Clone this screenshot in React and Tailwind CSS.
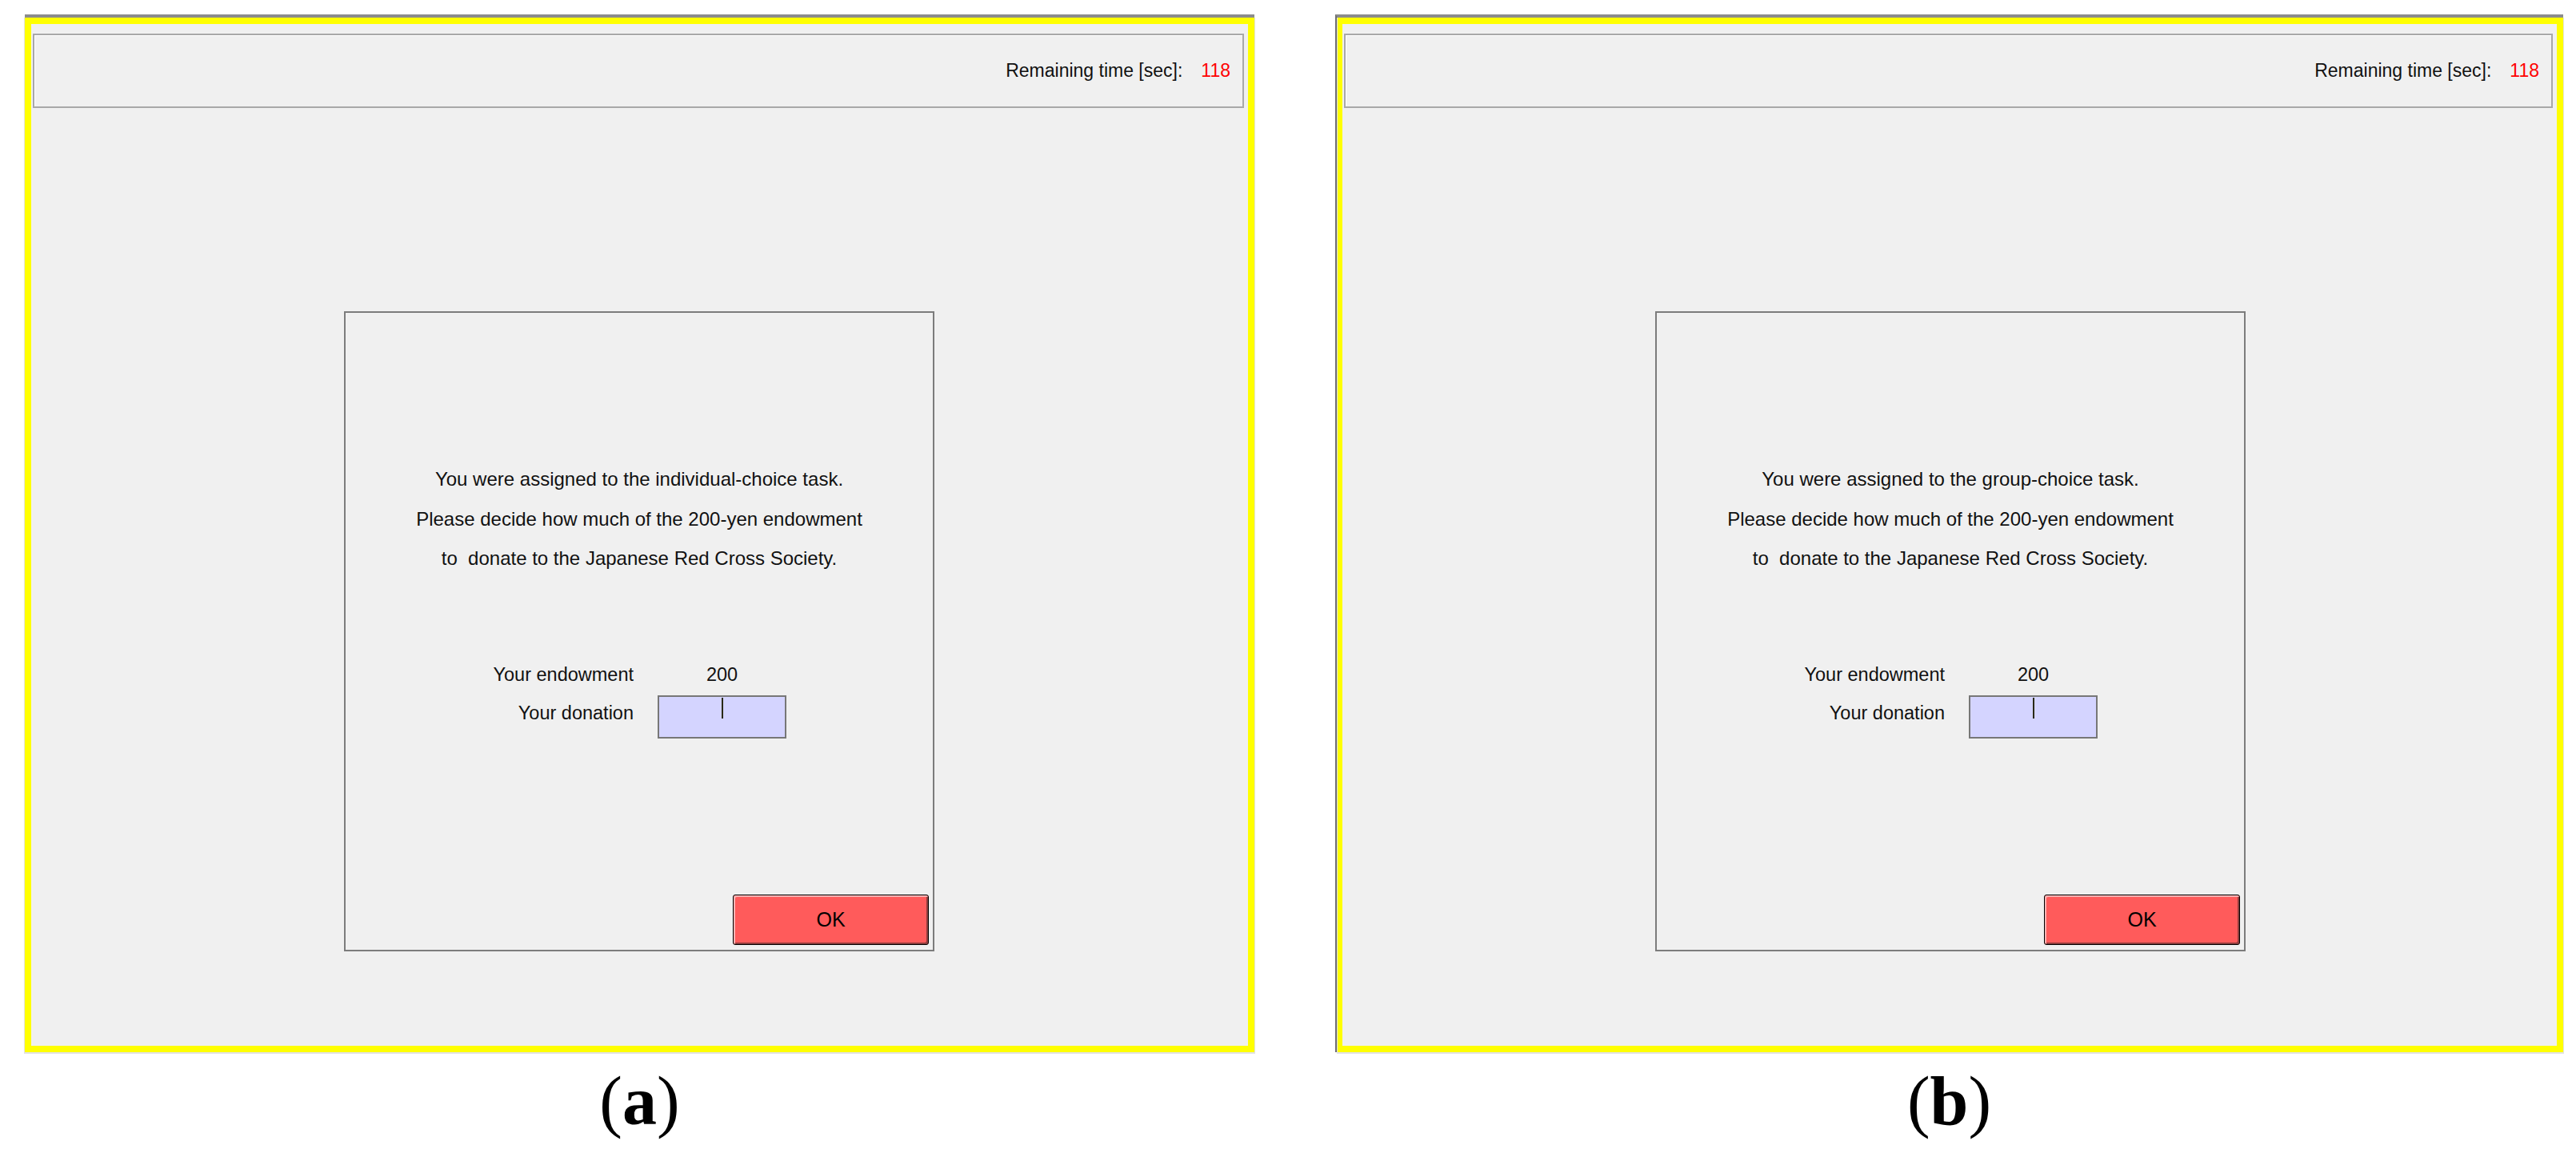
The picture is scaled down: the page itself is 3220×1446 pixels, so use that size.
const ui = { fontFamily: '"Liberation Sans", Arial, sans-serif' };
const serif = { fontFamily: '"Liberation Serif", "Times New Roman", serif' };

const Panel = ({ task, leftEdge }) => {
  return (
    <div
      className={`flex flex-col h-[1297px] border-t-4 border-[#8c8c8c] ${
        leftEdge ? "w-[1535px] border-l-[3px] border-l-[#6e6e6e]" : "w-[1537px]"
      }`}
    >
      <div
        className={`flex-1 flex flex-col border-8 border-[#ffff00] bg-[#f0f0f0] shadow-[0_1px_0_1px_#e2e2e2] ${
          leftEdge ? "border-l-[6px]" : ""
        }`}
      >
        {/* top bar with the timer */}
        <div
          className="mt-[12px] ml-[2px] mr-[5px] h-[93px] flex items-center justify-end pr-[15px] border-2 border-[#a8a8a8] shadow-[inset_1px_1px_0_#ffffff]"
          style={ui}
        >
          <span className="text-[23px] text-[#111]">Remaining time [sec]:</span>
          <span className="ml-[23px] text-[23px] text-[#ff0000]">118</span>
        </div>

        {/* dialog */}
        <div
          className="mt-[254px] ml-[391px] w-[738px] h-[800px] flex flex-col border-2 border-[#7c7c7c]"
          style={ui}
        >
          <div className="pt-[183px] flex flex-col items-center text-[24px] leading-[49.5px] text-[#111] whitespace-pre">
            <p>You were assigned to the {task}-choice task.</p>
            <p>Please decide how much of the 200-yen endowment</p>
            <p>to  donate to the Japanese Red Cross Society.</p>
          </div>

          <div className="mt-[102px] ml-[160px] grid grid-cols-[200px_161px] gap-x-[30px] gap-y-[8px] text-[23.5px] text-[#111]">
            <div className="text-right leading-[36px]">Your endowment</div>
            <div className="text-center leading-[36px]">200</div>
            <div className="text-right leading-[36px] pt-[4px]">Your donation</div>
            <div className="h-[54px] bg-[#d4d4ff] border-2 border-[#777777] flex justify-center pt-[1px]">
              <div className="w-[2px] h-[26px] bg-[#2a2a10]" />
            </div>
          </div>

          <button className="mt-auto mb-[6px] mr-[5px] self-end w-[245px] h-[63px] rounded-[3px] border border-black bg-[#ff5b5b] shadow-[inset_2px_2px_0_#ffb3b3,inset_-2px_-2px_0_#8e3d3d] text-[25px] font-medium text-black">
            OK
          </button>
        </div>
      </div>
    </div>
  );
};

const Caption = ({ letter }) => (
  <div className="mt-[18px] text-center text-[86px] leading-[86px] text-black" style={serif}>
    (<span className="font-bold">{letter}</span>)
  </div>
);

export default function App() {
  return (
    <div className="w-[3220px] h-[1446px] bg-white flex pt-[18px] pl-[31px] gap-[101px]">
      <div className="flex flex-col">
        <Panel task="individual" />
        <Caption letter="a" />
      </div>
      <div className="flex flex-col">
        <Panel task="group" leftEdge />
        <Caption letter="b" />
      </div>
    </div>
  );
}
